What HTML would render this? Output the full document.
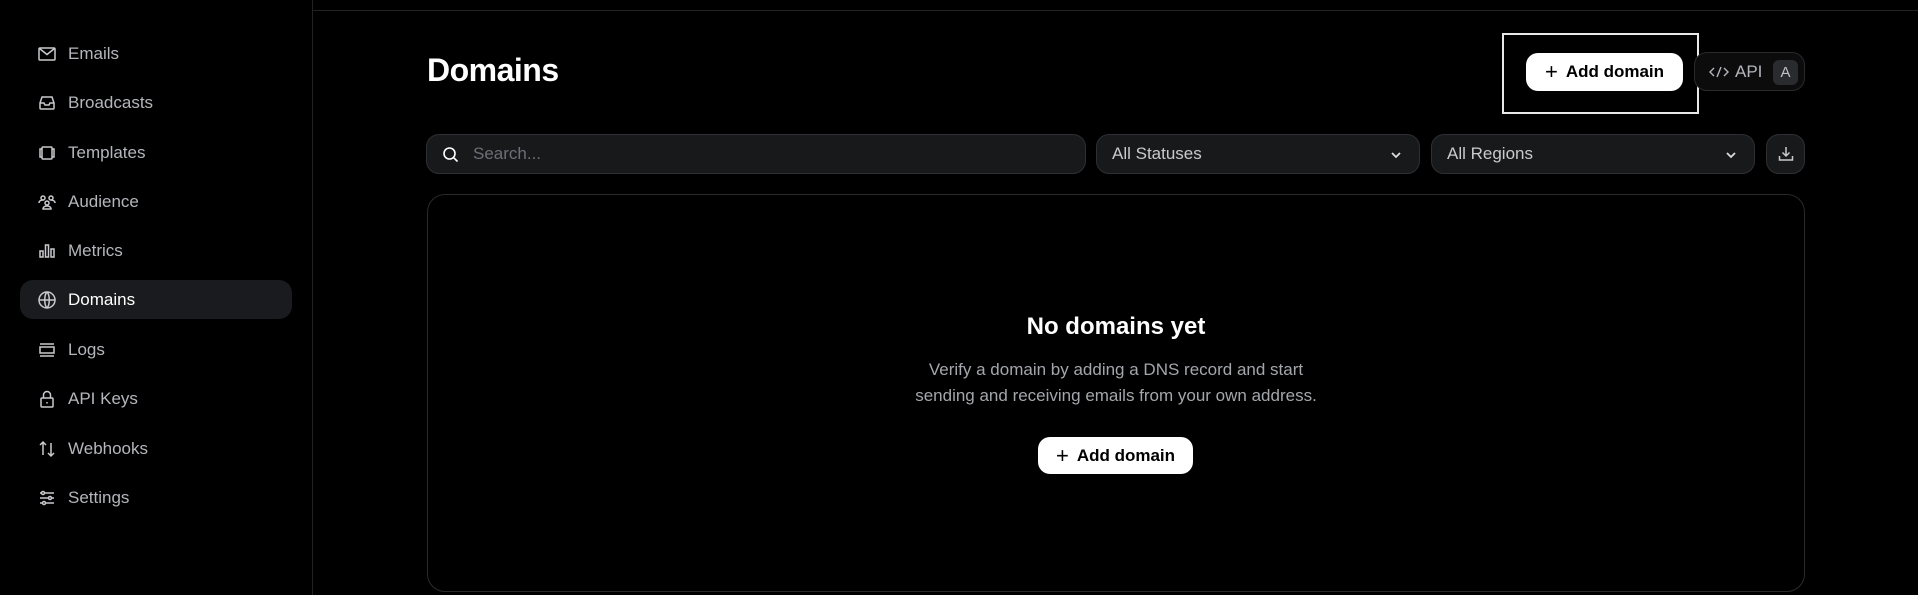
<!DOCTYPE html>
<html><head><meta charset="utf-8"><style>
*{box-sizing:border-box;margin:0;padding:0}
body{width:1918px;height:595px;background:#000;font-family:"Liberation Sans",sans-serif;color:#fff;position:relative;overflow:hidden}
.sb{position:absolute;left:0;top:0;width:313px;height:595px;border-right:1px solid #222}
.top{position:absolute;left:313px;top:10px;right:0;border-top:1px solid #222}
.item{position:absolute;left:20px;width:272px;height:39px;border-radius:13px;display:flex;align-items:center;padding-left:17px;font-size:17px;color:#b4b6bb}
.item svg{width:20px;height:20px;margin-right:11px;stroke:#c8cace;fill:none;stroke-width:1.5}
.item.on{background:#1a1b1e;color:#fff}
h1{position:absolute;left:427px;top:52px;font-size:32px;font-weight:700;letter-spacing:-.5px}
.btnw{position:absolute;background:#fff;color:#000;border-radius:12px;font-weight:700;font-size:17px;display:flex;align-items:center;justify-content:center;gap:8px}
.box{position:absolute;left:1502px;top:33px;width:197px;height:81px;border:2px solid #e8e8e8}
.api{position:absolute;left:1694px;top:52px;width:111px;height:39px;border:1px solid #2a2a2c;border-radius:13px;background:#0c0c0d;display:flex;align-items:center;padding-left:14px;color:#b4b6bb;font-size:17px}
.badge{position:absolute;left:78px;top:7px;width:25px;height:25px;border-radius:6px;background:#2a2b2e;color:#c0c2c6;font-size:15px;display:flex;align-items:center;justify-content:center}
.inp{position:absolute;top:134px;height:40px;background:#18191b;border:1px solid #2e2f32;border-radius:13px;display:flex;align-items:center;font-size:17px;color:#c8cace;padding-left:15px}
.chev{position:absolute;right:16px;top:13px}
.card{position:absolute;left:427px;top:194px;width:1378px;height:398px;border:1px solid #2a2a2c;border-radius:18px}
</style></head><body>
<div class="sb"></div><div class="top"></div>
<div class="item" style="top:34px"><svg viewBox="0 0 20 20"><rect x="2" y="4" width="16" height="12" rx="1"/><path d="M2.5 4.5l7.5 6 7.5-6"/></svg>Emails</div>
<div class="item" style="top:83px"><svg viewBox="0 0 20 20"><path d="M3 10l2-6h10l2 6v5a1 1 0 0 1-1 1H4a1 1 0 0 1-1-1z"/><path d="M3 10h4l1 2h4l1-2h4"/></svg>Broadcasts</div>
<div class="item" style="top:133px"><svg viewBox="0 0 20 20"><rect x="5" y="4" width="10" height="12" rx="1"/><path d="M5 6H3v8h2M15 6h2v8h-2"/></svg>Templates</div>
<div class="item" style="top:182px"><svg viewBox="0 0 20 20"><circle cx="6" cy="6" r="2"/><circle cx="14" cy="6" r="2"/><circle cx="10" cy="11" r="2"/><path d="M2 11c0-2 2-3 4-3M18 11c0-2-2-3-4-3M6 17c0-2 2-3 4-3s4 1 4 3z"/></svg>Audience</div>
<div class="item" style="top:231px"><svg viewBox="0 0 20 20"><rect x="3" y="10" width="3" height="6"/><rect x="8.5" y="4" width="3" height="12"/><rect x="14" y="8" width="3" height="8"/></svg>Metrics</div>
<div class="item on" style="top:280px"><svg viewBox="0 0 20 20"><circle cx="10" cy="10" r="8"/><path d="M2 10h16M10 2c-3 3-3 13 0 16M10 2c3 3 3 13 0 16"/></svg>Domains</div>
<div class="item" style="top:330px"><svg viewBox="0 0 20 20"><path d="M3 4h14M3 16h14"/><rect x="3" y="7" width="14" height="6"/></svg>Logs</div>
<div class="item" style="top:379px"><svg viewBox="0 0 20 20"><rect x="4" y="9" width="12" height="9" rx="1"/><path d="M6.5 9V6a3.5 3.5 0 0 1 7 0v3M10 13v1.5"/></svg>API Keys</div>
<div class="item" style="top:429px"><svg viewBox="0 0 20 20"><path d="M6 16V3M3 6l3-3 3 3M14 4v13M11 14l3 3 3-3"/></svg>Webhooks</div>
<div class="item" style="top:478px"><svg viewBox="0 0 20 20"><path d="M3 5h14M3 10h14M3 15h14"/><circle cx="6" cy="5" r="1.5" fill="#000"/><circle cx="13" cy="10" r="1.5" fill="#000"/><circle cx="7" cy="15" r="1.5" fill="#000"/></svg>Settings</div>

<h1>Domains</h1>
<div class="box"></div>
<div class="btnw" style="left:1526px;top:53px;width:157px;height:38px"><span style="font-weight:400;font-size:22px;line-height:1">+</span>Add domain</div>
<div class="api"><svg width="20" height="16" viewBox="0 0 20 16" fill="none" stroke="#b4b6bb" stroke-width="1.4"><path d="M5 4L1 8l4 4M15 4l4 4-4 4M12 3L8 13"/></svg><span style="margin-left:6px">API</span><div class="badge">A</div></div>

<div class="inp" style="left:426px;width:660px"><svg width="17" height="17" viewBox="0 0 17 17" fill="none" stroke="#fff" stroke-width="1.6"><circle cx="7.5" cy="7.5" r="5.5"/><path d="M11.5 11.5l4 4"/></svg><span style="margin-left:14px;color:#6b6f76">Search...</span></div>
<div class="inp" style="left:1096px;width:324px">All Statuses<svg class="chev" width="14" height="14" viewBox="0 0 14 14" fill="none" stroke="#ddd" stroke-width="1.8"><path d="M3 5l4 4 4-4"/></svg></div>
<div class="inp" style="left:1431px;width:324px">All Regions<svg class="chev" width="14" height="14" viewBox="0 0 14 14" fill="none" stroke="#ddd" stroke-width="1.8"><path d="M3 5l4 4 4-4"/></svg></div>
<div class="inp" style="left:1766px;width:39px;padding:0;justify-content:center"><svg width="18" height="18" viewBox="0 0 18 18" fill="none" stroke="#c8cace" stroke-width="1.5"><path d="M9 2v9M5.5 7.5L9 11l3.5-3.5M2.5 11v4h13v-4"/></svg></div>

<div class="card"></div>
<div style="position:absolute;left:427px;width:1378px;top:313px;text-align:center;font-size:24px;font-weight:700">No domains yet</div>
<div style="position:absolute;left:427px;width:1378px;top:357px;text-align:center;font-size:17px;line-height:26px;color:#a3a6ab">Verify a domain by adding a DNS record and start<br>sending and receiving emails from your own address.</div>
<div class="btnw" style="left:1038px;top:437px;width:155px;height:37px"><span style="font-weight:400;font-size:22px;line-height:1">+</span>Add domain</div>
</body></html>
